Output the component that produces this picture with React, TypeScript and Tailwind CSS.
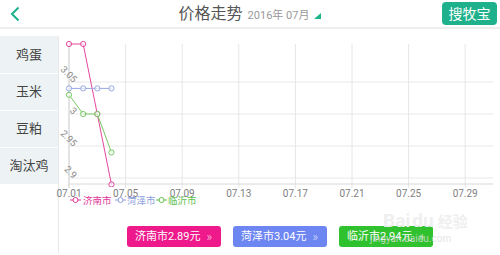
import React from "react";

const FONT = { fontFamily: 'Roboto, "Noto Sans CJK SC", "Noto Sans", sans-serif' };

const X0 = 10; // svg x of 07.01 axis
const DX = 14.15; // px per day
const gx = (d: number) => X0 + (d - 1) * DX;
const gy = (v: number) => 46 + ((3.05 - v) / 0.05) * 32;

type Series = { name: string; color: string; pts: [number, number][] };

const series: Series[] = [
  { name: "济南市", color: "#e2469f", pts: [[gx(1), 8], [gx(2), 8], [gx(3), gy(3.0)], [gx(4), gy(2.89)]] },
  { name: "菏泽市", color: "#98a8e2", pts: [[gx(1), gy(3.04)], [gx(2), gy(3.04)], [gx(3), gy(3.04)], [gx(4), gy(3.04)]] },
  { name: "临沂市", color: "#78c862", pts: [[gx(1), gy(3.03)], [gx(2), gy(3.0)], [gx(3), gy(3.0)], [gx(4), gy(2.94)]] },
];

const xLabels = ["07.01", "07.05", "07.09", "07.13", "07.17", "07.21", "07.25", "07.29"];
const yLabels: [string, number][] = [["3.05", 3.05], ["3", 3.0], ["2.95", 2.95], ["2.9", 2.9]];

function Chart() {
  const right = 434;
  const bottom = 148;
  return (
    <svg width={441} height={176} className="block overflow-visible">
      <defs>
        <clipPath id="plot">
          <rect x={X0 - 4} y={5} width={right - X0 + 8} height={bottom - 2} />
        </clipPath>
      </defs>
      {yLabels.map(([, v]) => (
        <line key={v} x1={X0} x2={right} y1={gy(v)} y2={gy(v)} stroke="#e8e8e8" strokeWidth={1} />
      ))}
      {xLabels.map((_, i) => (
        <line key={i} x1={X0 + i * 56.6} x2={X0 + i * 56.6} y1={8} y2={bottom + 4} stroke="#e6e6e6" strokeWidth={1} />
      ))}
      <line x1={X0} x2={X0} y1={8} y2={bottom + 4} stroke="#d4d4d4" strokeWidth={1} />
      <line x1={X0} x2={right} y1={bottom} y2={bottom} stroke="#d8d8d8" strokeWidth={1} />
      {yLabels.map(([t, v]) => (
        <g key={t} transform={`translate(14 ${gy(v) + 1}) rotate(45)`}>
          <text x={0} y={0} fontSize={9.5} fill="#888" textAnchor="end" style={FONT}>
            {t}
          </text>
        </g>
      ))}
      {xLabels.map((t, i) => (
        <text key={t} x={X0 + i * 56.6} y={161} fontSize={10} fill="#808080" textAnchor="middle" style={FONT}>
          {t}
        </text>
      ))}
      <g clipPath="url(#plot)">
        {series.map((s) => (
          <g key={s.name}>
            <polyline
              points={s.pts.map((p) => p.join(",")).join(" ")}
              fill="none"
              stroke={s.color}
              strokeWidth={1}
            />
            {s.pts.map((p, i) => (
              <circle key={i} cx={p[0]} cy={p[1]} r={2.6} fill="white" fillOpacity={0.6} stroke={s.color} strokeWidth={1} />
            ))}
          </g>
        ))}
      </g>
      {[
        { c: "#e2369a", n: "济南市", m: 11, t: 24 },
        { c: "#8c9ee0", n: "菏泽市", m: 56, t: 68 },
        { c: "#5cc04a", n: "临沂市", m: 97, t: 109 },
      ].map((l) => (
        <g key={l.n}>
          <line x1={l.m} x2={l.m + 11} y1={164} y2={164} stroke={l.c} strokeWidth={1} />
          <circle cx={l.m + 5.5} cy={164} r={2.5} fill="white" stroke={l.c} strokeWidth={1} />
          <text x={l.t} y={168} fontSize={9.5} fill={l.c} style={FONT}>
            {l.n}
          </text>
        </g>
      ))}
    </svg>
  );
}

export default function App() {
  const cats = ["鸡蛋", "玉米", "豆粕", "淘汰鸡"];
  const btns = [
    { t: "济南市2.89元", c: "bg-[#ee1a8c]" },
    { t: "菏泽市3.04元", c: "bg-[#6e86f2]" },
    { t: "临沂市2.94元", c: "bg-[#30c22e]" },
  ];
  return (
    <div className="relative w-[500px] h-[255px] bg-white overflow-hidden" style={FONT}>
      <div className="flex h-[29px] items-stretch border-b-2 border-[#eeeeee]">
        <div className="w-[60px] flex items-center pl-[9px]">
          <svg width={12} height={16} viewBox="0 0 12 16">
            <path d="M9.5 1.5 L3 8 L9.5 14.5" fill="none" stroke="#1db38b" strokeWidth={2} />
          </svg>
        </div>
        <div className="flex-1 flex items-center justify-center gap-[5px]">
          <span className="text-[16px] leading-none text-[#555555]">价格走势</span>
          <span className="text-[11px] leading-none text-[#999999] mt-[3px]">2016年 07月</span>
          <svg width={7} height={6} className="mt-[5px]">
            <polygon points="7,0 7,6 0,6" fill="#1db38b" />
          </svg>
        </div>
        <div className="w-[60px] flex justify-end pr-[3px] pt-[2px]">
          <div className="w-[55px] h-[23px] rounded-[4px] bg-[#1eb18b] text-white text-[14px] leading-none flex items-center justify-center">
            搜牧宝
          </div>
        </div>
      </div>

      <div className="flex mt-[7px] h-[217px]">
        <div className="w-[58px] self-start flex flex-col bg-[#edf3f4]">
          {cats.map((c, i) => (
            <div
              key={c}
              className={`h-[37px] flex items-center justify-center text-[13px] text-[#444444] ${
                i > 0 ? "border-t border-white" : ""
              }`}
            >
              {c}
            </div>
          ))}
        </div>
        <div className="flex-1 flex flex-col border-l border-[#e8e8e8]">
          <Chart />
          <div className="flex justify-center gap-[12px] mt-[14px]">
            {btns.map((b) => (
              <div
                key={b.t}
                className={`w-[94px] h-[21px] rounded-[3px] ${b.c} flex items-center justify-center gap-[6px] text-white text-[11px] leading-none`}
              >
                <span>{b.t}</span>
                <span className="text-white/60 text-[12px]">»</span>
              </div>
            ))}
          </div>
        </div>
      </div>

      <div className="absolute left-[383px] top-[211px] flex items-end gap-[2px] pointer-events-none">
        <span className="text-[19px] font-bold leading-none text-[#efefef]">Bai</span>
        <span className="text-[19px] font-bold leading-none text-[#efefef]">du</span>
        <span className="text-[15px] font-bold leading-none text-[#efefef] ml-[2px]">经验</span>
      </div>
      <div className="absolute left-[370px] top-[234px] text-[10px] leading-none text-[#dddddd]/80 pointer-events-none">
        jingyan.baidu.com
      </div>
    </div>
  );
}
